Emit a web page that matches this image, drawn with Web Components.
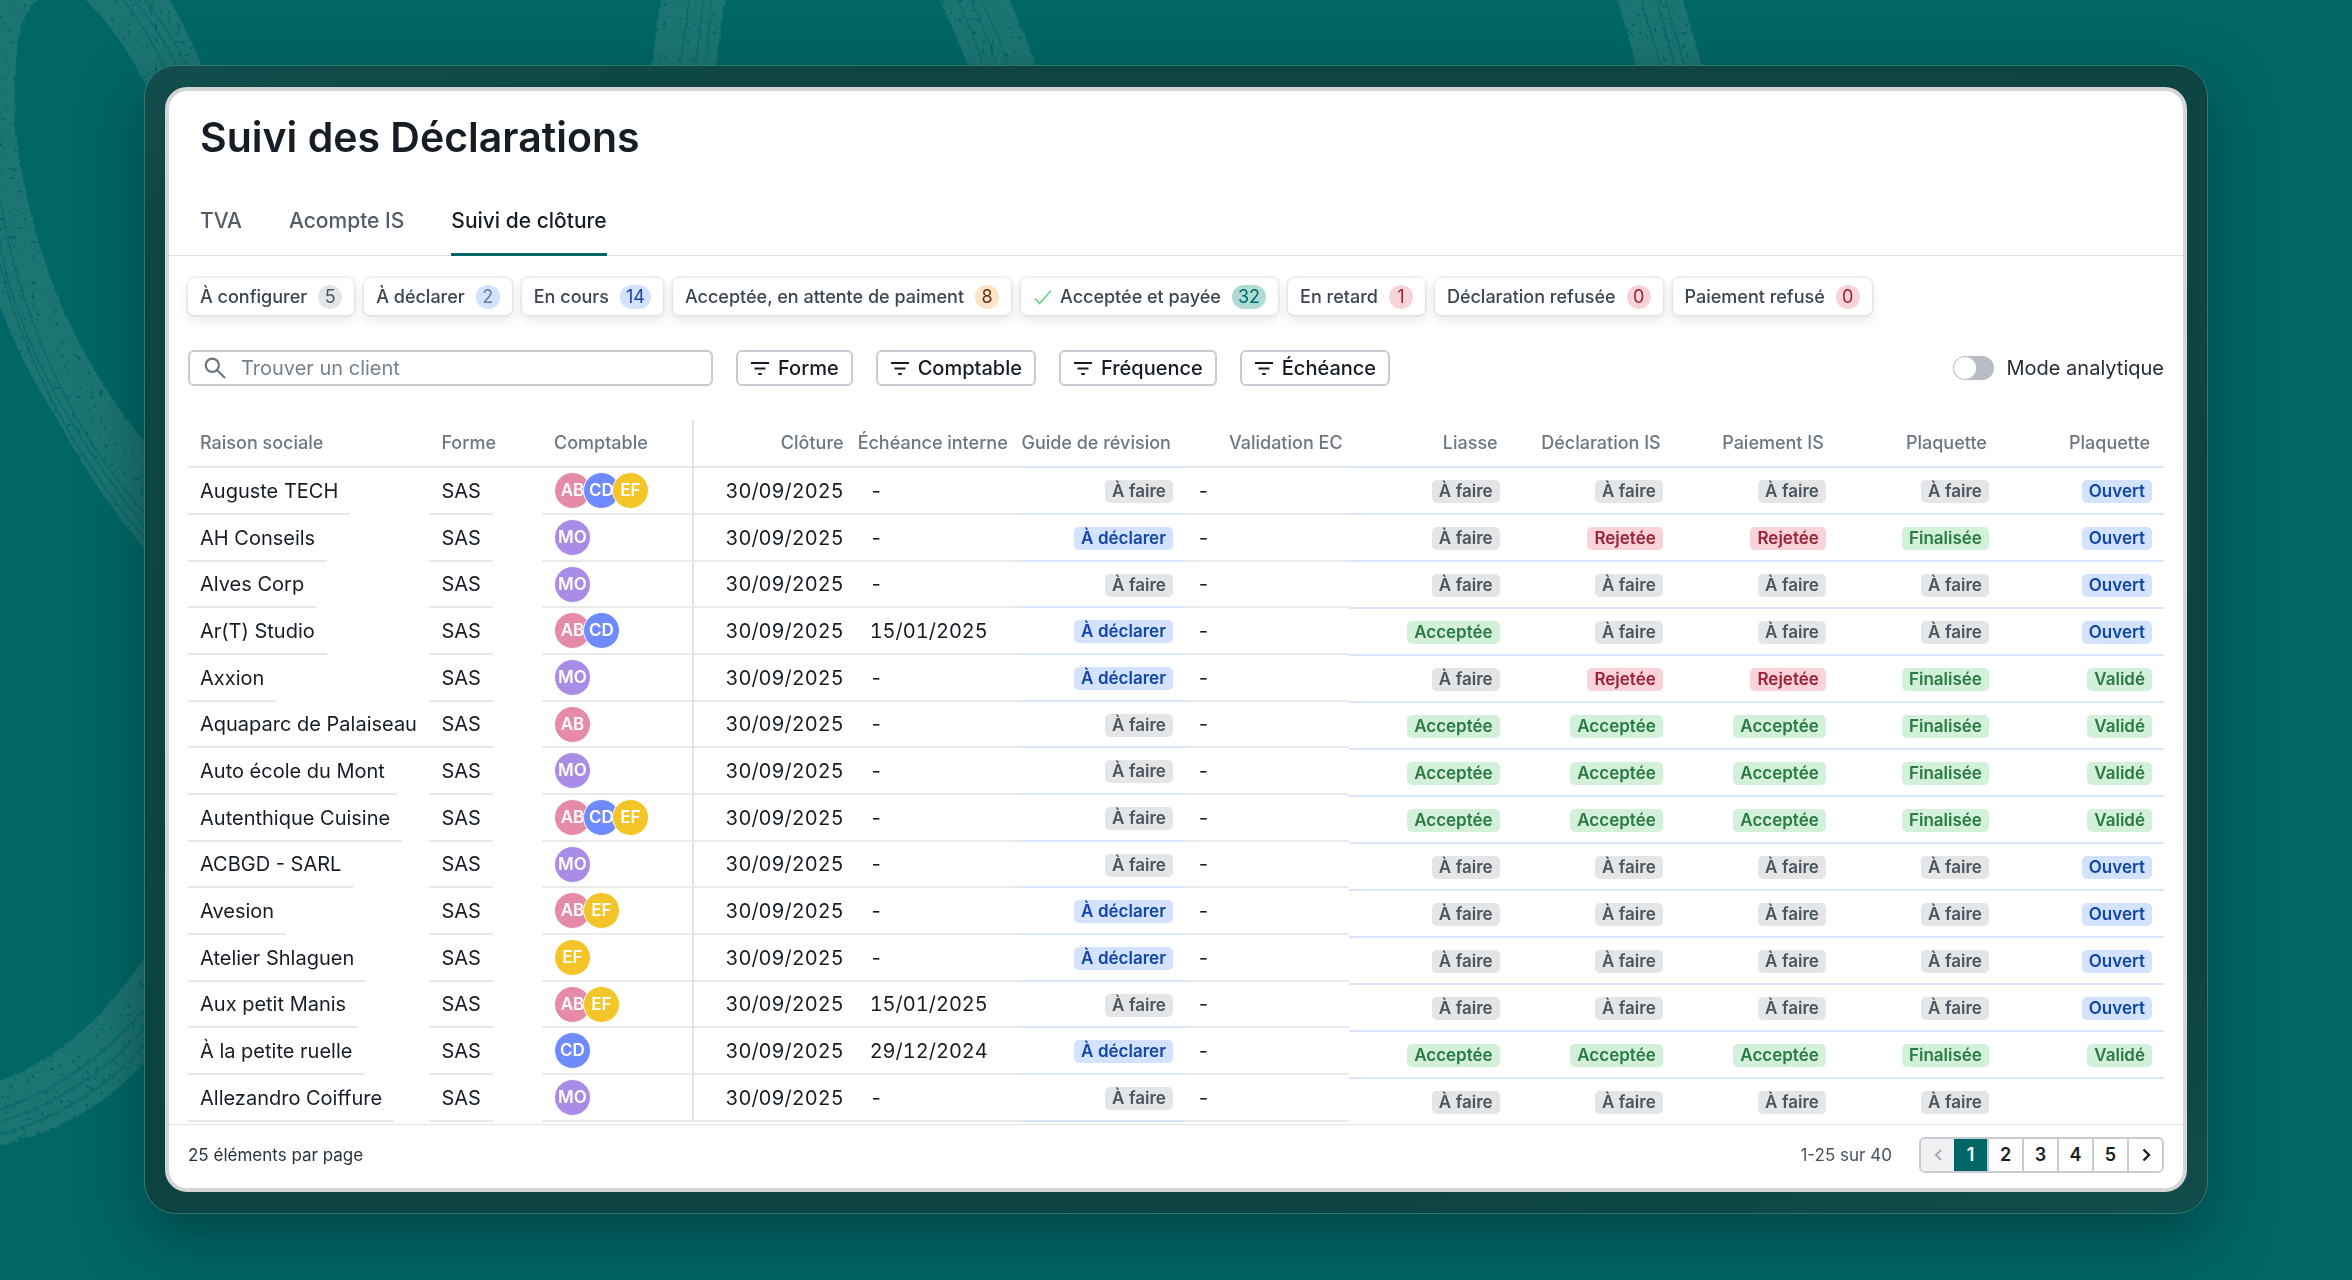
<!DOCTYPE html>
<html lang="fr">
<head>
<meta charset="utf-8">
<title>Suivi des Déclarations</title>
<style>
html, body { margin: 0; min-height: 100%; background: #006666; }
body { font-family: Inter, "Liberation Sans", sans-serif; color: #161d24; }
</style>
</head>
<body>
<app-stage>
  <app-window>
    <page-tabs slot="header" heading="Suivi des Déclarations"></page-tabs>
    <status-chips></status-chips>
    <filter-bar></filter-bar>
    <closing-grid></closing-grid>
    <page-footer slot="footer"></page-footer>
  </app-window>
</app-stage>

<script>
const define = (name, render) => customElements.define(name, class extends HTMLElement {
  constructor() {
    super();
    this.attachShadow({ mode: 'open' });
  }
  connectedCallback() {
    this.shadowRoot.innerHTML = '<style>*{box-sizing:border-box}button,input{font-family:inherit}</style>' + render(this);
  }
});

define('app-stage', () => `
<style>
:host { display: block; position: relative; min-height: 1280px; padding: 65px 144px 66px; box-sizing: border-box; overflow: hidden; }
svg { position: absolute; inset: 0; width: 100%; height: 100%; }
.content { position: relative; }
</style>
<svg aria-hidden="true" fill="none">
  <defs>
    <filter id="grain" x="-5%" y="-5%" width="110%" height="110%">
      <feTurbulence type="fractalNoise" baseFrequency=".22" numOctaves="2" seed="4" result="n"/>
      <feColorMatrix in="n" values="0 0 0 0 0  0 0 0 0 0  0 0 0 0 0  0 0 0 -16 11.2" result="m"/>
      <feComposite in="SourceGraphic" in2="m" operator="in" result="c"/>
      <feDisplacementMap in="c" in2="n" scale="4"/>
    </filter>
  </defs>
  <g filter="url(#grain)">
    <g transform="scale(1 1.148)">
      <path fill="#1b7573" d="M-30 -30H145Q178 5 204 62L150 82Q122 30 85 0Q50 -18 28 9Q12 30 15 110Q32 235 100 330Q122 362 150 390V484Q95 428 55 362Q22 318 0 267Q-25 210 -30 100Z"/>
      <path stroke="#006666" stroke-opacity=".7" stroke-width="1.5" d="M118 -5Q148 24 170 70M130 -5Q160 26 184 70M140 -5Q170 26 195 70M-4 150Q10 250 65 345Q100 405 150 452M-5 180Q2 255 50 335Q90 400 150 465M-5 215Q20 305 75 385Q110 435 150 474"/>
    </g>
    <g transform="translate(0 -78) scale(1 1.111)">
      <path fill="#1b7573" d="M-10 1046Q85 1018 150 924V1020Q90 1085 -10 1103Z"/>
      <path stroke="#006666" stroke-opacity=".7" stroke-width="1.5" d="M-10 1072Q85 1045 150 972M-10 1083Q85 1058 150 990M-10 1094Q85 1072 150 1006"/>
    </g>
    <g fill="#1b7573">
      <path d="M661 -5H725Q721 30 715 70H652Q655 30 661 -5Z"/>
      <path d="M937 -5H1007Q1024 30 1037 70H970Q954 30 937 -5Z"/>
      <path d="M1615 -5H1681Q1692 30 1703 70H1637Q1627 30 1615 -5Z"/>
    </g>
    <g stroke="#006666" stroke-opacity=".7" stroke-width="1.5">
      <path d="M690 -5L680 70M704 -5L695 70M712 -5L705 70"/>
      <path d="M955 -5Q975 35 984 70M968 -5Q988 35 998 70M978 -5Q1000 35 1008 70"/>
      <path d="M1640 -5L1662 70M1655 -5L1676 70M1664 -5L1686 70"/>
    </g>
  </g>
</svg>
<div class="content"><slot></slot></div>`);

define('app-window', () => `
<style>
:host { display: block; padding: 21px 20px; border: 1px solid #2f7768; border-radius: 32px;
  background: linear-gradient(165deg, #114e4d, #0e4443 12%, #0d4242 85%, #114d4c);
  box-shadow: 0 24px 60px rgba(0, 40, 42, .5); }
main { display: flex; flex-direction: column; background: #fff; border: 4px solid #d4d5d5; border-radius: 22px; overflow: hidden; }
.body { display: flex; flex-direction: column; padding: 22px 19px 0; }
</style>
<main>
  <slot name="header"></slot>
  <div class="body"><slot></slot></div>
  <slot name="footer"></slot>
</main>`);

define('page-tabs', el => `
<style>
:host { display: block; padding: 20px 31px 0; border-bottom: 1px solid #dfe1e4; }
h1 { margin: 0; font-size: 41px; line-height: 52px; font-weight: 600; color: #161d24; }
nav { display: flex; gap: 47px; margin-top: 46px; }
a { padding-bottom: 20px; font-size: 21px; line-height: 24px; font-weight: 500; color: #525d68; text-decoration: none; }
a[aria-current] { color: #161d24; border-bottom: 3px solid #006666; margin-bottom: -1px; }
</style>
<h1>${el.getAttribute('heading')}</h1>
<nav>
  <a href="#tva">TVA</a>
  <a href="#acompte">Acompte IS</a>
  <a href="#cloture" aria-current="page">Suivi de clôture</a>
</nav>`);

const CHIPS = [
  ['À configurer', 5, 'grey'], ['À déclarer', 2, 'sky'], ['En cours', 14, 'blue'],
  ['Acceptée, en attente de paiment', 8, 'orange'], ['Acceptée et payée', 32, 'teal'],
  ['En retard', 1, 'red'], ['Déclaration refusée', 0, 'red'], ['Paiement refusé', 0, 'red']
];
define('status-chips', () => `
<style>
:host { display: flex; gap: 10px; }
button { display: flex; align-items: center; height: 37px; padding: 0 12px; border: 0; border-radius: 6px; background: #fff;
  font-size: 18px; line-height: 24px; font-weight: 500; color: #3a4550; white-space: nowrap;
  box-shadow: 0 0 3px rgba(20, 30, 40, .2), 0 5px 12px rgba(20, 30, 40, .1); }
b { margin-left: 11px; min-width: 24px; height: 24px; padding: 0 6px; border-radius: 12px; font-size: 18px; font-weight: 400; text-align: center; }
svg { width: 20px; height: 20px; margin: 0 7px 0 0; }
.grey { background: #e3e5e7; color: #4b555e; }
.sky { background: #d2e2ff; color: #6b7d95; }
.blue { background: #d2e2ff; color: #1247a8; }
.orange { background: #ffe3c8; color: #5a3413; }
.teal { background: #aedcd4; color: #00686a; }
.red { background: #f8d3d8; color: #9b2335; }
</style>
${CHIPS.map(([label, n, tone]) => `<button type="button">${tone === 'teal' ? '<svg viewBox="0 0 20 20" fill="none" stroke="#6fcf8b" stroke-width="1.6" aria-hidden="true"><path d="M2 11.5l4.5 5L18 3.5"/></svg>' : ''}${label}<b class="${tone}">${n}</b></button>`).join('')}`);

define('filter-bar', () => `
<style>
:host { display: flex; align-items: center; gap: 23px; margin-top: 35px; }
.search { display: flex; align-items: center; width: 525px; height: 36px; padding: 0 12px 0 14px; gap: 15px; border: 2px solid #c3cad0; border-radius: 6px; }
.search svg { width: 22px; height: 22px; flex: none; }
input[type=search] { flex: 1; min-width: 0; border: 0; outline: 0; padding: 0; background: none; font-size: 20px; line-height: 24px; color: #161d24; }
input::placeholder { color: #76818b; opacity: 1; }
button { display: flex; align-items: center; gap: 8px; height: 36px; padding: 0 12px; border: 2px solid #c6ccd2; border-radius: 6px; background: #fff; font-size: 20px; font-weight: 500; line-height: 24px; color: #161d24; }
button svg { width: 20px; height: 20px; }
label.toggle { display: flex; align-items: center; gap: 13px; margin-left: auto; font-size: 20px; line-height: 24px; color: #252d35; }
label.toggle input { appearance: none; display: flex; width: 41px; height: 24px; margin: 0; padding: 1px; border-radius: 12px; background: #b7bdc3; }
label.toggle input::before { content: ""; width: 22px; height: 22px; border-radius: 50%; background: #fff; }
</style>
<label class="search"><svg viewBox="0 0 22 22" fill="none" stroke="#6b7680" stroke-width="2.2" aria-hidden="true"><circle cx="8.3" cy="8.3" r="6.6"/><path d="M13 13l8 8"/></svg>
<input type="search" placeholder="Trouver un client" aria-label="Trouver un client"></label>
${['Forme', 'Comptable', 'Fréquence', 'Échéance'].map(f => `<button type="button"><svg viewBox="0 0 20 20" fill="none" stroke="#161d24" stroke-width="2" aria-hidden="true"><path d="M1 5h18M4.500 10.500h11M8.200 16h3.600"/></svg>${f}</button>`).join('')}
<label class="toggle"><input type="checkbox" role="switch">Mode analytique</label>`);

define('status-badge', el => `
<style>
:host { display: inline-block; height: 23px; padding: 0 7px; border-radius: 5px; font-size: 17px; line-height: 23px; font-weight: 600; vertical-align: middle; white-space: nowrap; }
:host([tone=grey]) { background: #e4e5e7; color: #4b555e; }
:host([tone=blue]) { background: #d2e2ff; color: #1247a8; }
:host([tone=green]) { background: #d3f0da; color: #2b7a43; }
:host([tone=red]) { background: #f9d3d9; color: #9b2335; }
</style><slot></slot>`);

const AVATARS = { AB: '#e58aa7', CD: '#708bff', EF: '#f4c529', MO: '#a98ce6' };
define('avatar-stack', el => `
<style>
:host { display: flex; }
span { width: 37px; height: 37px; margin-right: -8px; border: 1px solid #fff; border-radius: 50%; font-size: 17px; line-height: 35px; font-weight: 600; text-align: center; color: #fff; }
</style>
${el.getAttribute('people').split(' ').map(p => `<span style="background:${AVATARS[p]}">${p}</span>`).join('')}`);

const TONES = { 'À faire': 'grey', 'À déclarer': 'blue', 'Ouvert': 'blue', 'Acceptée': 'green', 'Finalisée': 'green', 'Validé': 'green', 'Rejetée': 'red' };
const F = 'À faire', D = 'À déclarer', A = 'Acceptée', R = 'Rejetée', Z = 'Finalisée', O = 'Ouvert', V = 'Validé';
const ROWS = [
  ['Auguste TECH', 'AB CD EF', '-', F, [F, F, F, F, O]],
  ['AH Conseils', 'MO', '-', D, [F, R, R, Z, O]],
  ['Alves Corp', 'MO', '-', F, [F, F, F, F, O]],
  ['Ar(T) Studio', 'AB CD', '15/01/2025', D, [A, F, F, F, O]],
  ['Axxion', 'MO', '-', D, [F, R, R, Z, V]],
  ['Aquaparc de Palaiseau', 'AB', '-', F, [A, A, A, Z, V]],
  ['Auto école du Mont', 'MO', '-', F, [A, A, A, Z, V]],
  ['Autenthique Cuisine', 'AB CD EF', '-', F, [A, A, A, Z, V]],
  ['ACBGD - SARL', 'MO', '-', F, [F, F, F, F, O]],
  ['Avesion', 'AB EF', '-', D, [F, F, F, F, O]],
  ['Atelier Shlaguen', 'EF', '-', D, [F, F, F, F, O]],
  ['Aux petit Manis', 'AB EF', '15/01/2025', F, [F, F, F, F, O]],
  ['À la petite ruelle', 'CD', '29/12/2024', D, [A, A, A, Z, V]],
  ['Allezandro Coiffure', 'MO', '-', F, [F, F, F, F, '']]
];
const badge = s => s ? `<status-badge tone="${TONES[s]}">${s}</status-badge>` : '';
define('closing-grid', () => `
<style>
:host { display: flex; align-items: flex-start; height: 704px; margin-top: 34px; overflow: hidden; }
.dossiers { flex: 1160 1 0; min-width: 0; }
.statuts { flex: 815 1 0; min-width: 0; }
table { width: 100%; table-layout: fixed; border-collapse: separate; border-spacing: 0; }
thead th { height: 48px; padding: 0 14px 0 0; border-bottom: 2px solid #e5e7e9; font-size: 18px; line-height: 24px; font-weight: 500; color: #6c7781; text-align: right; white-space: nowrap; }
thead th.start { text-align: left; padding: 0 0 0 12px; }
thead th.wide { padding: 0 6px 0 0; }
td { height: 47px; padding: 0 12px; border-bottom: 2px solid #e9eaec; font-size: 20px; line-height: 24px; white-space: nowrap; font-variant-numeric: tabular-nums; }
tbody th, td.fit { height: 47px; padding: 0; border: 0; text-align: left; vertical-align: top; font-size: 20px; line-height: 24px; font-weight: 400; color: #161d24; white-space: nowrap; }
.dossiers tbody tr:nth-child(3n) > * { height: 46px; }
.fit span { display: inline-flex; align-items: center; height: 100%; padding: 0 12px; border-bottom: 2px solid #e5e7e9; vertical-align: top; }
.split { border-right: 2px solid #e1e3e5; }
.end { text-align: right; }
td.date { padding-right: 14px; }
.dossiers .blue { border-bottom-color: #d8e5fd; }
.statuts thead th, .statuts td { border-bottom-color: #d8e5fd; text-align: right; }
</style>
<table class="dossiers">
  <colgroup><col style="width:20.8%"><col style="width:9.7%"><col style="width:13.1%"><col span="4"></colgroup>
  <thead><tr><th class="start">Raison sociale</th><th class="start">Forme</th><th class="start split">Comptable</th><th>Clôture</th><th>Échéance interne</th><th class="blue">Guide de révision</th><th class="wide">Validation EC</th></tr></thead>
  <tbody>${ROWS.map(([name, people, due, guide]) => `<tr><th scope="row" class="fit"><span>${name}</span></th><td class="fit"><span>SAS</span></td><td class="split"><avatar-stack people="${people}"></avatar-stack></td><td class="end date">30/09/2025</td><td>${due}</td><td class="end blue">${badge(guide)}</td><td>-</td></tr>`).join('')}</tbody>
</table>
<table class="statuts">
  <thead><tr>${['Liasse', 'Déclaration IS', 'Paiement IS', 'Plaquette', 'Plaquette'].map(h => `<th>${h}</th>`).join('')}</tr></thead>
  <tbody>${ROWS.map(r => `<tr>${r[4].map(s => `<td>${badge(s)}</td>`).join('')}</tr>`).join('')}</tbody>
</table>`);

define('page-footer', () => `
<style>
:host { display: flex; align-items: center; height: 64px; padding: 0 19px 4px; border-top: 1px solid #dfe1e4; box-sizing: border-box; font-size: 17px; line-height: 24px; color: #2a333b; }
.range { margin-left: auto; color: #47525c; }
nav { display: flex; height: 36px; margin-left: 27px; border: 2px solid #c6ccd2; border-radius: 6px; overflow: hidden; }
button { display: grid; place-items: center; width: 35px; padding: 0; border: 0; border-right: 2px solid #c6ccd2; background: #fff; font-size: 18px; font-weight: 600; color: #161d24; }
button:last-child { border-right: 0; width: 33px; }
button:first-child { width: 33px; border-right: 0; background: #f1f1f3; color: #a2abb3; }
button[aria-current] { background: #006666; color: #fff; }
svg { width: 16px; height: 16px; }
</style>
<span>25 éléments par page</span><span class="range">1-25 sur 40</span>
<nav aria-label="Pagination">
  <button type="button" disabled aria-label="Page précédente"><svg viewBox="0 0 16 16" fill="none" stroke="currentColor" stroke-width="2"><path d="M11 3L6 8l5 5"/></svg></button>
  <button type="button" aria-current="page">1</button><button type="button">2</button><button type="button">3</button><button type="button">4</button><button type="button">5</button>
  <button type="button" aria-label="Page suivante"><svg viewBox="0 0 16 16" fill="none" stroke="currentColor" stroke-width="2.400"><path d="M5.500 2.500L11 8l-5.500 5.500"/></svg></button>
</nav>`);
</script>
</body>
</html>
